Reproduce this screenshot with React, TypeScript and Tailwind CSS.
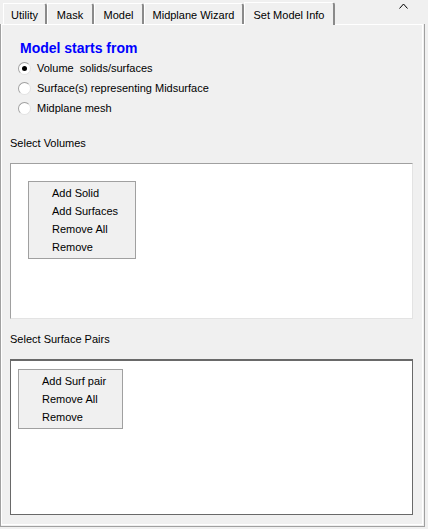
import React from 'react';

const tabs = [
    { label: 'Utility', w: 'w-[44px]' },
    { label: 'Mask', w: 'w-[47px]' },
    { label: 'Model', w: 'w-[50px]' },
    { label: 'Midplane Wizard', w: 'w-[100px]' },
];

function Radio({ checked, label }: { checked?: boolean; label: string }) {
    return (
        <div className="flex items-center h-5 pl-[16px]">
            <div className="w-[13px] h-[13px] rounded-full border border-t-[#a0a0a0] border-l-[#a0a0a0] border-r-[#e3e3e3] border-b-[#e3e3e3] bg-white flex items-center justify-center">
                {checked && <div className="w-[5px] h-[5px] rounded-full bg-black" />}
            </div>
            <span className="ml-[6px] whitespace-pre">{label}</span>
        </div>
    );
}

function Menu({ items, className }: { items: string[]; className: string }) {
    return (
        <div className={"bg-[#f0f0f0] border border-[#a0a0a0] pt-[2px] " + className}>
            {items.map((it) => (
                <div key={it} className="h-[18px] leading-[18px] pl-[23px]">{it}</div>
            ))}
        </div>
    );
}

export default function App() {
    return (
        <div
            className="w-[428px] h-[529px] bg-[#f0f0f0] flex flex-col text-[11px] text-black"
            style={{ fontFamily: '"Liberation Sans", Arial, sans-serif' }}
        >
            {/* tab strip */}
            <div className="h-6 flex items-end pl-[3px]">
                {tabs.map((t) => (
                    <div
                        key={t.label}
                        className={"h-[21px] border-l border-t border-white border-r-2 border-r-[#8a8a8a] rounded-tr-[3px] flex items-center justify-center pt-[3px] " + t.w}
                    >
                        {t.label}
                    </div>
                ))}
                <div className="h-[23px] w-[91px] -mb-px z-10 bg-[#f0f0f0] border-l border-t border-white border-r-2 border-r-[#8a8a8a] rounded-tr-[3px] flex items-center justify-center pt-[2px]">
                    Set Model Info
                </div>
                <svg className="ml-auto mr-[20px] self-start mt-[3px]" width="9" height="6" viewBox="0 0 9 6">
                    <polyline points="0.5,5.5 4.5,1 8.5,5.5" fill="none" stroke="#000" strokeWidth="1" />
                </svg>
            </div>

            {/* tab panel */}
            <div className="w-[425px] h-[503px] border-r border-b border-[#a0a0a0] border-l border-l-[#a0a0a0] pr-px pb-px">
                <div className="h-full border-t border-white border-l border-l-white border-r border-b border-[#696969] flex flex-col">
                    <div className="pl-[18px] pt-[15px] text-[14px] font-bold text-[#0000ff] leading-[16px]">
                        Model starts from
                    </div>
                    <div className="mt-[2px] flex flex-col">
                        <Radio checked label="Volume  solids/surfaces" />
                        <Radio label="Surface(s) representing Midsurface" />
                        <Radio label="Midplane mesh" />
                    </div>

                    <div className="pl-[8px] mt-[17px] h-[16px] leading-[16px]">Select Volumes</div>
                    <div className="ml-[8px] mt-[12px] w-[403px] h-[156px] bg-white border border-t-[#a0a0a0] border-l-[#a0a0a0] border-r-[#e3e3e3] border-b-[#e3e3e3] pl-[17px] pt-[17px]">
                        <Menu className="w-[108px] h-[78px]" items={['Add Solid', 'Add Surfaces', 'Remove All', 'Remove']} />
                    </div>

                    <div className="pl-[8px] mt-[12px] h-[16px] leading-[16px]">Select Surface Pairs</div>
                    <div className="ml-[8px] mt-[12px] w-[403px] h-[156px] bg-white border border-[#696969] border-t-2 pl-[7px] pt-[8px]">
                        <Menu className="w-[105px] h-[60px]" items={['Add Surf pair', 'Remove All', 'Remove']} />
                    </div>
                </div>
            </div>
        </div>
    );
}
